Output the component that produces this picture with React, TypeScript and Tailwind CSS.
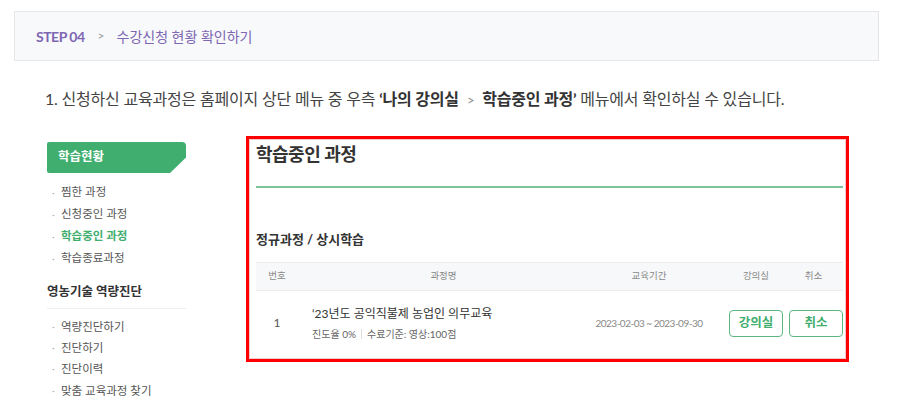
import React from "react";

const font = { fontFamily: 'Lato, "Noto Sans CJK KR", "Noto Sans", sans-serif' };

const menuA = ["찜한 과정", "신청중인 과정", "학습중인 과정", "학습종료과정"];
const menuB = ["역량진단하기", "진단하기", "진단이력", "맞춤 교육과정 찾기"];

function MenuItem({ label, active, tight }: { label: string; active?: boolean; tight?: boolean }) {
  return (
    <li className={`flex items-center text-[11.5px] ${tight ? "h-[21.3px]" : "h-[22px]"}`}>
      <span className="w-[14px] pl-[5px] text-[#aaa] text-[10px]">·</span>
      <span className={active ? "text-[#3fae6e] font-semibold" : "text-[#555]"}>{label}</span>
    </li>
  );
}

export default function App() {
  return (
    <div className="w-[902px] h-[409px] bg-white overflow-hidden" style={font}>
      {/* step header */}
      <div className="pt-[11px] pl-[14px]">
        <div className="w-[865px] h-[50px] bg-[#f8f9fb] border border-[#e6e6e8] flex items-center pl-[21px]">
          <span className="text-[14px] font-bold text-[#7d66b2] tracking-[-0.5px]">STEP 04</span>
          <span className="ml-[13px] text-[12px] text-[#999]">&gt;</span>
          <span className="ml-[12px] text-[14px] text-[#7d66b2]">수강신청 현황 확인하기</span>
        </div>
      </div>

      {/* description */}
      <p className="mt-[26px] pl-[45px] text-[16px] text-[#444] tracking-[-0.2px] leading-[24px]">
        1. 신청하신 교육과정은 홈페이지 상단 메뉴 중 우측{" "}
        <b className="text-[#333]">‘나의 강의실</b>
        <span className="text-[13px] text-[#888] mx-[8px]">&gt;</span>
        <b className="text-[#333]">학습중인 과정’</b> 메뉴에서 확인하실 수 있습니다.
      </p>

      <div className="flex mt-[24px] pl-[47px]">
        {/* sidebar */}
        <div className="w-[139px] pt-[6px]">
          <div className="h-[31px] bg-[#3fae6e] rounded-tr-[4px] rounded-l-[2px] flex items-center pl-[11px] text-white text-[12.5px] font-bold [clip-path:polygon(0_0,100%_0,100%_50%,calc(100%-16px)_100%,0_100%)]">
            학습현황
          </div>
          <ul className="mt-[8px]">
            {menuA.map((m) => (
              <MenuItem key={m} label={m} active={m === "학습중인 과정"} />
            ))}
          </ul>
          <div className="mt-[14px] text-[12.5px] font-semibold text-[#333] pb-[6px] border-b border-[#eee]">
            영농기술 역량진단
          </div>
          <ul className="mt-[7px]">
            {menuB.map((m) => (
              <MenuItem key={m} label={m} tight />
            ))}
          </ul>
        </div>

        {/* highlighted panel */}
        <div className="ml-[60px] w-[603px] h-[226px] border-[3px] border-[#ff0000]">
          <div className="h-full border border-[#f2c8c8] pl-[6px] pr-[2px]">
            <h2 className="pt-[1px] text-[18px] font-semibold text-[#333] leading-[26px] tracking-[-0.5px]">학습중인 과정</h2>
            <div className="mt-[19px] h-[2px] bg-[#7cc59b]" />
            <h3 className="mt-[42px] text-[13px] font-bold text-[#333] leading-[18px]">정규과정 / 상시학습</h3>
            <div className="mt-[14px]">
              <div className="flex items-center h-[29px] bg-[#f7f8fa] border-t border-[#ececec] border-b text-[9.5px] text-[#888]">
                <div className="w-[42px] text-center">번호</div>
                <div className="w-[291px] text-center">과정명</div>
                <div className="w-[120px] text-center">교육기간</div>
                <div className="w-[19px]" />
                <div className="w-[56px] text-center">강의실</div>
                <div className="w-[59px] text-center">취소</div>
              </div>
              <div className="flex items-center h-[64px]">
                <div className="w-[42px] text-center text-[12px] text-[#555]">1</div>
                <div className="w-[291px] pl-[14px]">
                  <div className="text-[12px] text-[#333] leading-[16px]">‘23년도 공익직불제 농업인 의무교육</div>
                  <div className="mt-[5px] flex items-center text-[10px] text-[#666] leading-[14px]">
                    <span>진도율 0%</span>
                    <span className="mx-[5px] h-[10px] w-px bg-[#ddd]" />
                    <span>수료기준: 영상:100점</span>
                  </div>
                </div>
                <div className="w-[120px] text-center text-[10px] text-[#888] tracking-[-0.5px]">
                  2023-02-03 ~ 2023-09-30
                </div>
                <div className="w-[19px]" />
                <div className="w-[56px] flex justify-center">
                  <button className="w-[54px] h-[27px] border border-[#5cb883] rounded-[4px] text-[12.5px] font-bold text-[#3fae6e]">
                    강의실
                  </button>
                </div>
                <div className="w-[59px] flex justify-end">
                  <button className="w-[54px] h-[27px] border border-[#5cb883] rounded-[4px] text-[12.5px] font-bold text-[#3fae6e]">
                    취소
                  </button>
                </div>
              </div>
            </div>
          </div>
        </div>
      </div>
    </div>
  );
}
